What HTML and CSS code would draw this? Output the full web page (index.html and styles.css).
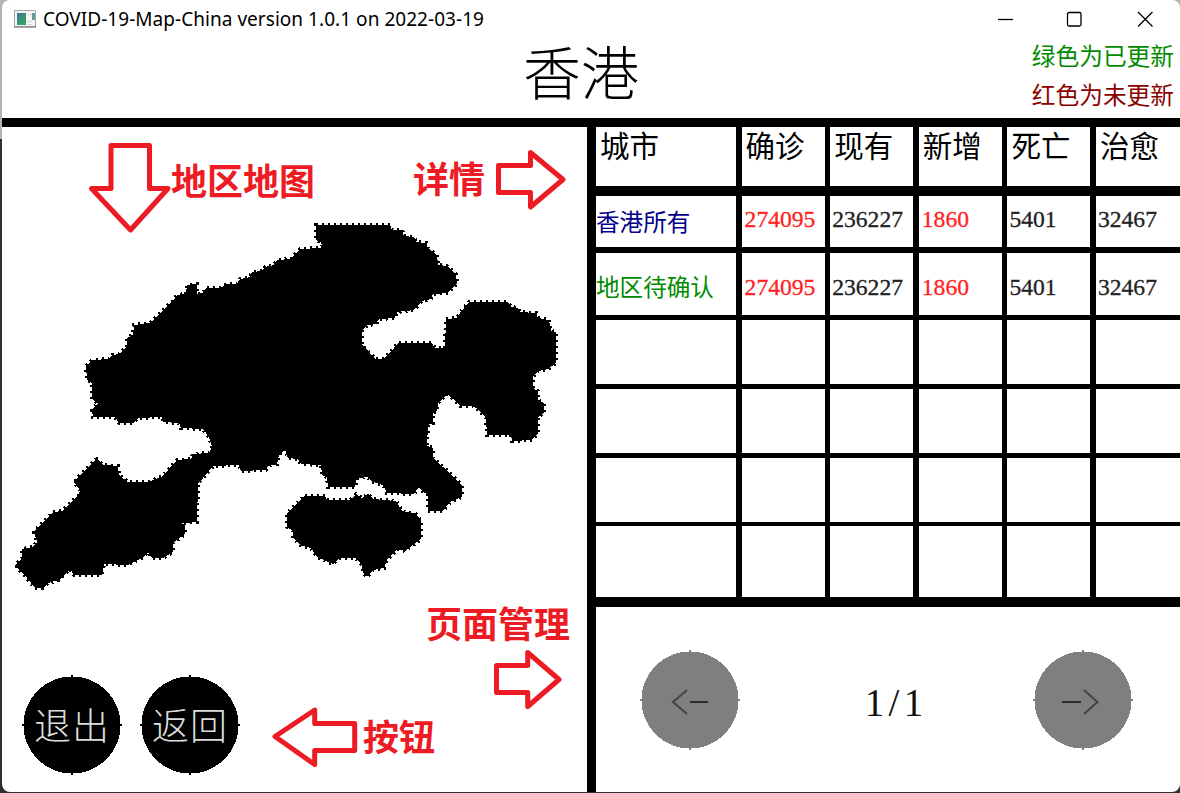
FILE: index.html
```html
<!DOCTYPE html>
<html lang="zh-CN">
<head>
<meta charset="utf-8">
<title>COVID-19-Map-China</title>
<link rel="stylesheet" href="styles.css">
</head>
<body>
<div class="window">
  <header class="titlebar">
    <svg class="app-icon" width="24" height="18" viewBox="0 0 24 18">
      <defs><linearGradient id="land" x1="0" y1="0" x2="0.5" y2="1"><stop offset="0" stop-color="#3f7397"/><stop offset="1" stop-color="#36a266"/></linearGradient></defs>
      <rect x=".5" y=".5" width="21" height="16" fill="#f4f4f4" stroke="#a9a5a9"/>
      <path d="M0 17h22" stroke="#8f8b8f" stroke-width="1.4"/>
      <rect x="3" y="3" width="9" height="12" fill="url(#land)"/>
      <path d="M13 4.500h5M13 11.500h5M13 14.500h5" stroke="#d6d6d6"/>
      <rect x="18" y="3" width="3" height="7" fill="#5d9c9c"/>
    </svg>
    <span class="caption">COVID-19-Map-China version 1.0.1 on 2022-03-19</span>
    <svg class="controls" width="156" height="18" viewBox="0 0 156 18" fill="none" stroke="#000" stroke-width="1.3">
      <path d="M0 9.500h15"/>
      <rect x="69.500" y="2.500" width="13.500" height="13.500" rx="1.500"/>
      <path d="M140 2l14.500 14.500M154.500 2L140 16.500"/>
    </svg>
  </header>
  <section class="heading">
    <h1>香港</h1>
    <div class="legend"><p class="updated">绿色为已更新</p><p class="stale">红色为未更新</p></div>
  </section>
  <main class="content">
    <section class="region">
      <svg class="map" width="585" height="549" viewBox="2 127 585 549">
        <g class="land">
        <path d="M316 225L390 225L392 230L402 230L404 236L414 237L416 242L426 243L428 248L437 255L438 265L447 266L456 274L457 283L448 293L433 294L431 299L422 301L414 310L397 312L395 318L379 319L376 324L367 325L362 331L362 345L370 353L375 359L383 359L390 353L398 343L432 343L435 348L445 348L446 319L457 318L460 313L469 302L508 302L511 307L518 308L520 312L536 313L538 318L549 320L551 331L556 332L556 363L548 369L538 371L533 377L533 388L538 391L538 400L544 403L544 413L538 417L538 433L532 440L512 441L511 435L487 435L486 418L479 410L473 406L460 406L452 398L447 394L443 398L438 403L437 411L433 413L433 423L428 425L427 446L433 448L433 458L443 467L455 478L462 486L462 497L450 502L443 511L428 511L428 495L422 491L418 487L414 494L387 493L383 485L373 482L367 477L357 478L355 487L328 487L327 477L322 475L321 465L301 464L298 459L288 458L285 449L279 455L277 464L268 466L266 470L241 471L239 465L213 466L203 478L198 483L197 522L182 523L185 527L185 534L173 543L173 552L163 558L152 558L148 552L142 558L128 565L104 564L102 575L74 575L70 569L59 580L48 583L43 588L35 588L27 578L15 565L22 558L22 549L33 547L37 542L34 532L53 512L62 511L79 495L80 490L74 482L90 465L97 459L103 465L118 466L119 475L128 482L149 482L163 476L177 460L191 459L193 454L209 453L212 447L209 437L203 429L181 428L179 423L163 422L162 417L138 418L133 423L119 423L115 417L93 417L92 410L98 403L92 399L92 383L87 380L86 366L93 360L109 359L112 355L119 354L127 347L127 338L133 335L134 325L150 323L173 301L177 295L186 294L187 285L197 284L197 294L203 293L206 288L220 288L227 284L237 284L240 279L250 277L252 272L262 271L265 267L274 265L277 260L291 259L295 254L300 249L320 248L322 246L321 242L316 240Z"/>
        <path d="M305 496L325 496L327 500L350 500L356 494L362 498L368 494L373 499L396 501L403 512L415 513L421 520L421 539L405 551L397 549L387 560L384 568L373 570L367 577L363 573L362 565L355 558L339 558L333 564L317 557L311 548L300 545L293 538L293 531L287 527L287 513Z"/>
        </g>
      </svg>
      <div class="actions">
        <div class="round dark"><svg class="pips" width="100" height="100"><circle cx="50" cy="50" r="48.500"/><path d="M0 50h100M50 0v100"/></svg><span>退出</span></div>
        <div class="round dark"><svg class="pips" width="100" height="100"><circle cx="50" cy="50" r="48.500"/><path d="M0 50h100M50 0v100"/></svg><span>返回</span></div>
      </div>
    </section>
    <section class="details">
      <div class="row head"><div>城市</div><div>确诊</div><div>现有</div><div>新增</div><div>死亡</div><div>治愈</div></div>
      <div class="row total"><div class="city">香港所有</div><div class="hot">274095</div><div>236227</div><div class="hot">1860</div><div>5401</div><div>32467</div></div>
      <div class="row area"><div class="city">地区待确认</div><div class="hot">274095</div><div>236227</div><div class="hot">1860</div><div>5401</div><div>32467</div></div>
      <div class="row r3"><div></div><div></div><div></div><div></div><div></div><div></div></div>
      <div class="row r4"><div></div><div></div><div></div><div></div><div></div><div></div></div>
      <div class="row r5"><div></div><div></div><div></div><div></div><div></div><div></div></div>
      <div class="row r6"><div></div><div></div><div></div><div></div><div></div><div></div></div>
      <nav class="pager">
        <div class="round grey"><svg class="pips" width="100" height="100"><circle cx="50" cy="50" r="48.500"/><path d="M0 50h100M50 0v100"/><path class="arrow" d="M47 40L33 52L47 64"/><path class="shaft" d="M50 52h18"/></svg></div>
        <div class="page">1<span class="slash">/</span>1</div>
        <div class="round grey"><svg class="pips" width="100" height="100"><circle cx="50" cy="50" r="48.500"/><path d="M0 50h100M50 0v100"/><path class="arrow" d="M51 40L64.500 52L51 64"/><path class="shaft" d="M29 52h19"/></svg></div>
      </nav>
    </section>
  </main>
</div>
<svg class="notes" width="1180" height="793" viewBox="0 0 1180 793">
  <path d="M111 145.500H149.500V188.500H168L130.500 230L91.500 188.500H111Z"/>
  <path d="M498.500 165.500H530.500V152.500L563 179.500L530.500 207V192.500H498.500Z"/>
  <path d="M496.500 665.500H527.700V652.500L559 679.500L527.700 706.500V692.500H496.500Z"/>
  <path d="M354.700 723.500H314.700V710L275 736.500L314.700 764.500V750.500H354.700Z"/>
</svg>
<span class="note n-map">地区地图</span>
<span class="note n-detail">详情</span>
<span class="note n-page">页面管理</span>
<span class="note n-button">按钮</span>
</body>
</html>
```
FILE: styles.css
```css
* { box-sizing: border-box; margin: 0; padding: 0; }
body {
  width: 1180px; height: 793px; padding: 0 0 1px 2px; overflow: hidden;
  position: relative;
  background: linear-gradient(#b4b4b4 0 139px, #2d2d33 139px);
  font-family: "Noto Sans CJK SC", sans-serif;
}
.window {
  height: 792px; background: #fff; border-radius: 8px; overflow: hidden;
  display: flex; flex-direction: column;
}
.titlebar { height: 38px; display: flex; align-items: center; padding: 0 26px 0 12px; }
.app-icon { margin-right: 5px; }
.caption { font: 19px/38px "Noto Sans", sans-serif; letter-spacing: 0.040px; color: #000; white-space: nowrap; }
.controls { margin-left: auto; }
.heading {
  height: 89px; border-bottom: 9px solid #000; display: flex; justify-content: flex-end;
  position: relative;
}
h1 {
  position: absolute; left: 521px; top: -3px; font-size: 58px; line-height: 70px;
  font-weight: 300; color: #000;
}
.legend { padding: 0 6px 0 0; margin-top: -2px; font-size: 23.700px; line-height: 39px; }
.updated { color: #008b00; }
.stale { color: #8b0000; }
.content { flex: 1; display: flex; }
.region { width: 585px; }
.map { display: block; }
.land { fill: #000; stroke: #000; stroke-width: 4; stroke-dasharray: 2 4; }
.land path { shape-rendering: crispEdges; }
.actions { display: flex; gap: 18px; padding-left: 20px; margin-top: -1px; }
.round { width: 100px; height: 100px; display: grid; place-items: center; }
.round > * { grid-area: 1 / 1; }
.round span { color: #ddd; font-size: 37px; font-weight: 300; line-height: 40px; letter-spacing: 1px; padding-bottom: 2px; }
.dark { fill: #000; stroke: #000; }
.grey { fill: #7f7f7f; stroke: #7f7f7f; }
.pips { stroke-width: 2; display: block; }
.pips circle { stroke: none; shape-rendering: crispEdges; }
.pips .arrow { fill: none; stroke: #444; stroke-width: 2; }
.pips .shaft { stroke: #111; stroke-width: 1.500; }
.details { flex: 1; border-left: 9px solid #000; min-width: 0; }
.row {
  display: grid; grid-template-columns: 140px repeat(4, 83px) 1fr; column-gap: 5.600px;
  background: #000; border-bottom: 5px solid #000;
  font: 23.600px/24px "Liberation Serif", "Noto Sans CJK SC", serif; color: #222;
}
.row > div { background: #fff; padding-left: 2px; white-space: nowrap; -webkit-text-stroke: 0.300px; }
.head { height: 69px; border-bottom-width: 10px; font: 29.500px/34px "Noto Sans CJK SC", sans-serif; color: #000; }
.head > div { padding-left: 4px; -webkit-text-stroke: 0; }
.row .city { padding-left: 0; font-family: "Noto Sans CJK SC", sans-serif; color: #00008b; -webkit-text-stroke: 0; }
.row .hot { color: #f22; padding-left: 3px; }
.total { height: 57px; border-bottom-width: 6px; }
.total > div { padding-top: 11px; }
.total .city { padding-top: 13px; }
.area { height: 67px; }
.area > div { padding-top: 22px; }
.area .city { padding-top: 21px; color: #008b00; }
.r3 { height: 69px; }
.r4 { height: 69px; }
.r5 { height: 68px; border-bottom-width: 4px; }
.r6 { height: 81px; border-bottom-width: 10px; }
.pager { display: flex; justify-content: space-between; padding: 43px 47px 0 44px; }
.page { font: 39px/100px "Liberation Serif", serif; color: #111; padding: 3px 0 0 15px; }
.slash { display: inline-block; width: 19.500px; text-align: center; }
.notes { position: absolute; left: 0; top: 0; fill: none; stroke: #ed1c24; stroke-width: 5; stroke-linejoin: round; }
.note { position: absolute; color: #ed1c24; font-size: 36px; line-height: 40px; font-weight: 700; white-space: nowrap; }
.n-map { left: 171px; top: 159px; }
.n-detail { left: 413px; top: 157px; }
.n-page { left: 426px; top: 602px; }
.n-button { left: 363px; top: 715px; }
```
